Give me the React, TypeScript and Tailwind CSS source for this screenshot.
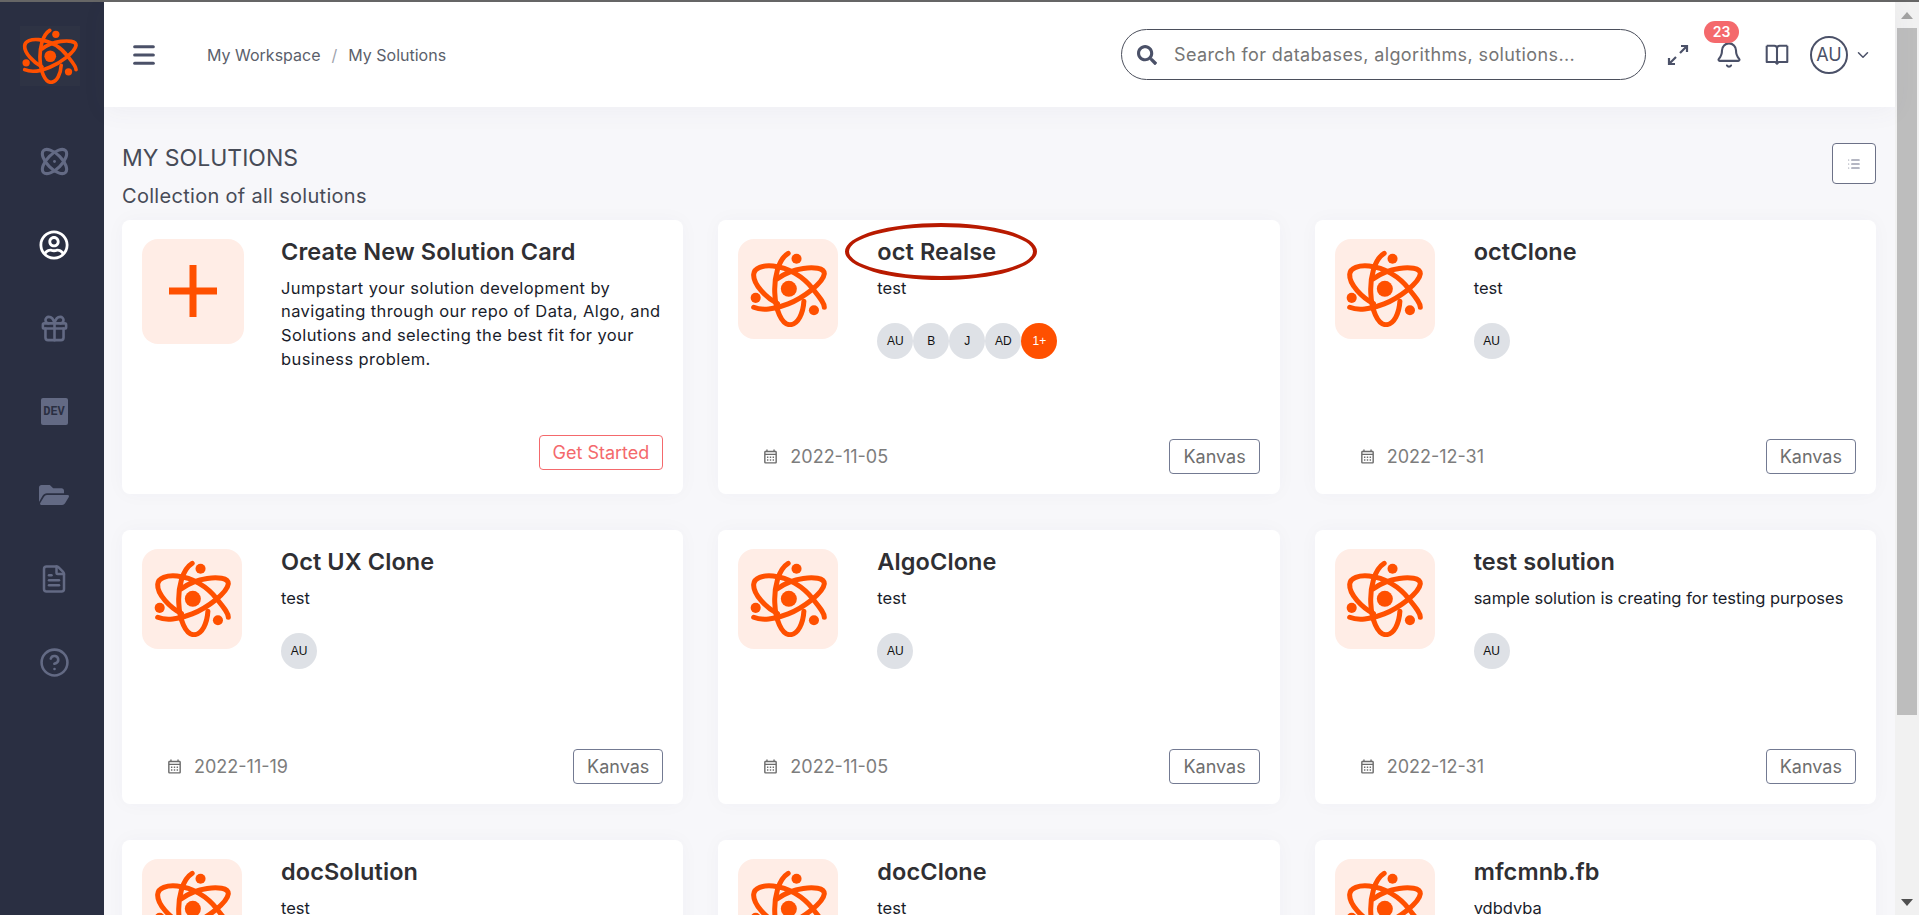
import { Bell, ChevronDown, CircleHelp, FileText, Gift, List, Menu } from "lucide-react";
import { FaFolderOpen, FaRegUserCircle, FaSearch } from "react-icons/fa";
import { MdOutlineCalendarMonth } from "react-icons/md";

const SOLUTIONS = [
  { name: "oct Realse", desc: "test", date: "2022-11-05", users: ["AU", "B", "J", "AD"], more: "1+", circled: true },
  { name: "octClone", desc: "test", date: "2022-12-31", users: ["AU"] },
  { name: "Oct UX Clone", desc: "test", date: "2022-11-19", users: ["AU"] },
  { name: "AlgoClone", desc: "test", date: "2022-11-05", users: ["AU"] },
  { name: "test solution", desc: "sample solution is creating for testing purposes", date: "2022-12-31", users: ["AU"] },
  { name: "docSolution", desc: "test", date: "2022-11-05", users: ["AU"] },
  { name: "docClone", desc: "test", date: "2022-11-05", users: ["AU"] },
  { name: "mfcmnb.fb", desc: "vdbdvba", date: "2022-12-31", users: ["AU"] },
];

function AtomLogo({ className }: { className?: string }) {
  return (
    <svg viewBox="36 48 230 228" className={className} fill="none" stroke="#ff5000" strokeWidth="15" strokeLinecap="round">
      <path d="M150 57C120 75 108 130 110 175C112 225 130 270 155 270C180 270 195 235 197 200" />
      <path d="M118 207C85 190 45 150 47 120C48 100 75 92 105 95C150 100 195 125 225 165C245 190 258 205 258 218" />
      <path d="M47 218C70 228 110 225 150 208C195 190 255 145 258 118C258 100 225 98 195 102C165 106 135 120 118 133" />
      <circle cx="152" cy="163" r="24" fill="#ff5000" stroke="none" />
      <circle cx="175" cy="73" r="15" fill="#ff5000" stroke="none" />
      <circle cx="53" cy="190" r="15" fill="#ff5000" stroke="none" />
      <circle cx="227" cy="227" r="15" fill="#ff5000" stroke="none" />
    </svg>
  );
}

function SmallAtom() {
  return (
    <svg viewBox="0 0 28 28" className="h-[29px] w-[29px]" fill="none" stroke="#636a84" strokeWidth="3">
      <ellipse cx="14" cy="14" rx="7" ry="15" transform="rotate(45 14 14)" />
      <ellipse cx="14" cy="14" rx="7" ry="15" transform="rotate(-45 14 14)" />
      <circle cx="14" cy="14" r="1.4" fill="#636a84" stroke="none" />
    </svg>
  );
}

function ExpandArrows() {
  return (
    <svg viewBox="0 0 24 24" className="h-[24px] w-[24px]" fill="none" stroke="#4b5168" strokeWidth="2.2">
      <path d="M14 10L21 3M15 3H21V9" />
      <path d="M10 14L3 21M3 15V21H9" />
    </svg>
  );
}

function BookIcon() {
  return (
    <svg viewBox="0 0 24 24" className="ml-[21px] h-[26px] w-[26px]" fill="none" stroke="#4b5168" strokeWidth="1.9" strokeLinejoin="round">
      <path d="M2.5 3.5H9.5C11 3.5 12 4.5 12 6V20" />
      <path d="M21.5 3.5H14.5C13 3.5 12 4.5 12 6" />
      <path d="M2.5 3.5V18.5H10.5L12 20L13.5 18.5H21.5V3.5" />
    </svg>
  );
}

function Sidebar() {
  return (
    <aside className="flex w-[104px] shrink-0 flex-col items-center bg-[#2a2f42] text-[#636a84]">
      <div className="mr-[4px] mt-[24px] flex h-[60px] w-[60px] items-center justify-center bg-[#2e3344]">
        <AtomLogo className="h-[56px] w-[56px]" />
      </div>
      <div className="mt-[60px] flex flex-col items-center gap-[53.6px] pl-[4px]">
        <div className="flex h-[30px] items-center"><SmallAtom /></div>
        <div className="flex h-[30px] items-center"><FaRegUserCircle className="text-[30px] text-white" /></div>
        <div className="flex h-[30px] items-center"><Gift size={31} strokeWidth={2} /></div>
        <div className="flex h-[30px] items-center">
          <span className="flex h-[27px] w-[27px] items-center justify-center rounded-[2px] bg-[#636a84] font-['Liberation_Mono',monospace] text-[12px] font-bold text-[#2a2f42]">DEV</span>
        </div>
        <div className="flex h-[30px] items-center"><FaFolderOpen className="text-[30px]" /></div>
        <div className="flex h-[30px] items-center"><FileText size={30} strokeWidth={2} /></div>
        <div className="flex h-[30px] items-center"><CircleHelp size={31} strokeWidth={2} /></div>
      </div>
    </aside>
  );
}

function Header() {
  return (
    <header className="relative z-10 flex h-[105px] shrink-0 items-center bg-white pl-[26px] pr-[23px] shadow-[0_4px_24px_rgba(70,70,110,0.05)]">
      <Menu size={28} strokeWidth={2.6} className="text-[#4b5168]" />
      <nav className="ml-[49px] flex items-center text-[16px] text-[#5b5f6b]">
        <span>My Workspace</span>
        <span className="mx-[11px] text-[#a0a3ad]">/</span>
        <span>My Solutions</span>
      </nav>
      <div className="ml-auto flex h-[51px] w-[525px] items-center rounded-full border border-[#4b4f5c] pl-[15px]">
        <FaSearch className="text-[20px] text-[#4b5168]" />
        <span className="ml-[17px] text-[18px] tracking-[0.38px] text-[#757575]">Search for databases, algorithms, solutions...</span>
      </div>
      <div className="ml-[20px]"><ExpandArrows /></div>
      <div className="relative ml-[25px]">
        <Bell size={28} strokeWidth={1.8} className="text-[#4b5168]" />
        <span className="absolute left-[-11px] top-[-20px] flex h-[22px] w-[35px] items-center justify-center rounded-full bg-[#f4696c] text-[14px] font-semibold text-white">23</span>
      </div>
      <BookIcon />
      <div className="ml-[20px] flex h-[38px] w-[38px] items-center justify-center rounded-full border-2 border-[#4b5168] text-[18px] text-[#4b5168]">AU</div>
      <ChevronDown size={18} strokeWidth={2} className="ml-[6px] text-[#4b5168]" />
    </header>
  );
}

function Avatar({ label, accent }: { label: string; accent?: boolean }) {
  return (
    <span className={`flex h-[36px] w-[36px] items-center justify-center rounded-full font-['Liberation_Sans',sans-serif] text-[12px] ${accent ? "bg-[#ff5000] text-white" : "bg-[#dee1e6] text-[#111]"}`}>
      {label}
    </span>
  );
}

function CreateCard() {
  return (
    <div className="flex h-[274px] rounded-[8px] bg-white pl-[20px] pr-[20px] pt-[19px] shadow-[0_0_20px_rgba(70,70,110,0.03)]">
      <div className="flex h-[105px] w-[102px] shrink-0 items-center justify-center rounded-[16px] bg-[#ffede6]">
        <svg viewBox="0 0 48 52" className="h-[52px] w-[48px]" fill="none" stroke="#ff5000" strokeWidth="7">
          <path d="M24 0V52M0 26H48" />
        </svg>
      </div>
      <div className="ml-[37px] flex min-w-0 flex-1 flex-col">
        <h3 className="text-[23.5px] font-semibold leading-[26px] tracking-[0.1px] text-[#2f2f33]">Create New Solution Card</h3>
        <p className="mt-[12px] text-[16.5px] leading-[23.7px] tracking-[0.4px] text-[#1a1d2b]">
          Jumpstart your solution development by navigating through our repo of Data, Algo, and Solutions and selecting the best fit for your business problem.
        </p>
        <span className="mb-[24px] mt-auto self-end rounded-[4px] border border-[#f4696c] px-[13px] py-[5px] text-[18px] leading-[23px] text-[#f4696c]">Get Started</span>
      </div>
    </div>
  );
}

function SolutionCard({ name, desc, date, users, more, circled }: { name: string; desc: string; date: string; users: string[]; more?: string; circled?: boolean }) {
  return (
    <div className="flex h-[274px] flex-col rounded-[8px] bg-white pl-[20px] pr-[20px] pt-[19px] shadow-[0_0_20px_rgba(70,70,110,0.03)]">
      <div className="flex min-h-0 flex-1">
        <div className="flex h-[100px] w-[100px] shrink-0 items-center justify-center rounded-[16px] bg-[#ffede6]">
          <AtomLogo className="h-[77px] w-[77px]" />
        </div>
        <div className="ml-[39px] min-w-0 flex-1">
          <h3 className="relative text-[23.5px] font-semibold leading-[26px] tracking-[0.1px] text-[#2f2f33]">
            {name}
            {circled && (
              <span className="absolute left-[-32px] top-[-16px] h-[57px] w-[192px] rounded-[50%] border-[4px] border-[#b81a00]" />
            )}
          </h3>
          <p className="mt-[12px] text-[16.5px] leading-[23.7px] text-[#1a1d2b]">{desc}</p>
          <div className="mt-[23px] flex">
            {users.map((u) => (
              <Avatar key={u} label={u} />
            ))}
            {more && <Avatar label={more} accent />}
          </div>
        </div>
      </div>
      <div className="mb-[20px] flex items-center">
        <MdOutlineCalendarMonth className="ml-[24px] text-[17px] text-[#6c6c6c]" />
        <span className="ml-[11px] text-[18px] text-[#7d7d7d]">{date}</span>
        <span className="ml-auto rounded-[4px] border border-[#737a92] px-[13px] py-[5px] text-[18px] leading-[23px] text-[#6e6e6e]">Kanvas</span>
      </div>
    </div>
  );
}

function Scrollbar() {
  return (
    <div className="flex w-[24px] shrink-0 flex-col items-center bg-[#f1f1f1] pl-[2px] pr-[2px]">
      <div className="flex h-[26px] items-center">
        <span className="h-0 w-0 border-x-[6px] border-b-[7px] border-x-transparent border-b-[#a3a3a3]" />
      </div>
      <div className="h-[687px] w-full bg-[#bdbdbd]" />
      <div className="mt-auto flex h-[26px] items-center">
        <span className="h-0 w-0 border-x-[6px] border-t-[7px] border-x-transparent border-t-[#505050]" />
      </div>
    </div>
  );
}

export default function App() {
  return (
    <div className="flex h-[915px] flex-col overflow-hidden font-['Inter',sans-serif]">
      <div className="h-[2px] shrink-0 bg-[#666]" />
      <div className="flex min-h-0 flex-1">
        <Sidebar />
        <div className="flex min-w-0 flex-1 flex-col bg-[#f7f7fa]">
          <Header />
          <main className="min-h-0 flex-1 overflow-hidden pl-[18px] pr-[19px]">
            <div className="flex items-start justify-between pt-[35px]">
              <div>
                <h1 className="text-[23px] leading-[32px] text-[#474b57]">MY SOLUTIONS</h1>
                <p className="mt-[8.7px] text-[20px] leading-[26px] tracking-[0.3px] text-[#474b57]">Collection of all solutions</p>
              </div>
              <span className="mt-[1px] flex h-[41px] w-[44px] items-center justify-center rounded-[4px] border border-[#6c7187] bg-white">
                <List size={14} strokeWidth={1.8} className="text-[#6c7187]" />
              </span>
            </div>
            <div className="mt-[11px] grid grid-cols-3 gap-x-[35px] gap-y-[36px]">
              <CreateCard />
              {SOLUTIONS.map((s) => (
                <SolutionCard key={s.name} {...s} />
              ))}
            </div>
          </main>
        </div>
        <Scrollbar />
      </div>
    </div>
  );
}
